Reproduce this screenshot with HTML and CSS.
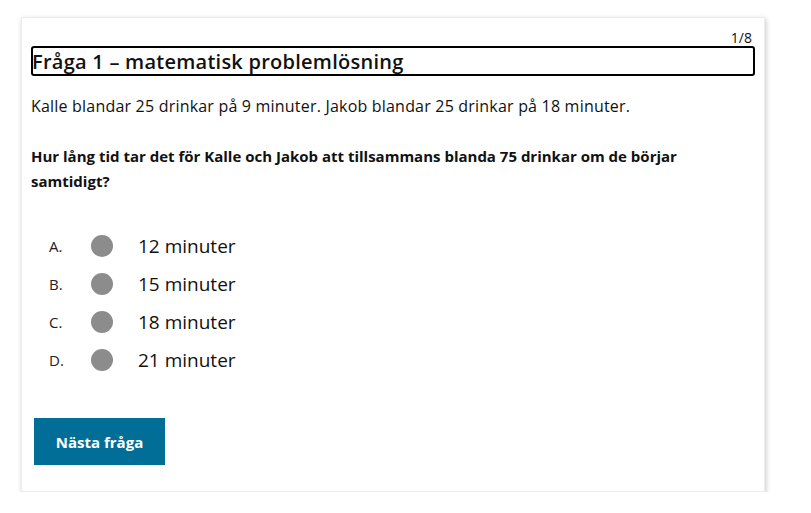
FILE: index.html
```html
<!DOCTYPE html>
<html lang="sv">
<head>
<meta charset="utf-8">
<link rel="stylesheet" href="styles.css">
</head>
<body>
<div class="card">
  <div class="counter">1/8</div>
  <h1 class="title">Fråga 1 – matematisk problemlösning</h1>
  <p class="intro">Kalle blandar 25 drinkar på 9 minuter. Jakob blandar 25 drinkar på 18 minuter.</p>
  <p class="question">Hur lång tid tar det för Kalle och Jakob att tillsammans blanda 75 drinkar om de börjar samtidigt?</p>
  <ul class="options">
    <li class="option"><span class="letter">A.</span><span class="dot"></span><span class="label">12 minuter</span></li>
    <li class="option"><span class="letter">B.</span><span class="dot"></span><span class="label">15 minuter</span></li>
    <li class="option"><span class="letter">C.</span><span class="dot"></span><span class="label">18 minuter</span></li>
    <li class="option"><span class="letter">D.</span><span class="dot"></span><span class="label">21 minuter</span></li>
  </ul>
  <button class="next">Nästa fråga</button>
</div>
</body>
</html>
```
FILE: styles.css
```css
html, body {
  margin: 0;
  padding: 0;
  background: #ffffff;
}
body {
  font-family: "Open Sans", sans-serif;
  color: #111;
  padding: 17px 0 0 21px;
}
.card {
  width: 744px;
  height: 475px;
  box-sizing: border-box;
  padding: 12px 9px 0 9px;
  background: #fff;
  border: 1px solid #ececec;
  box-shadow: 1px 2px 5px rgba(0,0,0,0.22);
}
.counter {
  text-align: right;
  font-size: 14px;
  line-height: 16px;
  padding-right: 3px;
}
.title {
  margin: 0;
  height: 30px;
  box-sizing: border-box;
  border: 2px solid #000;
  border-radius: 3px;
  font-size: 20px;
  font-weight: 600;
  letter-spacing: 0.25px;
  line-height: 27px;
  text-indent: -1px;
  color: #111;
}
.intro {
  margin: 18px 0 0 0;
  font-size: 16px;
  letter-spacing: 0.2px;
  line-height: 24px;
}
.question {
  margin: 26px 0 0 0;
  font-size: 15px;
  font-weight: 700;
  line-height: 25px;
}
.options {
  list-style: none;
  margin: 33px 0 0 0;
  padding: 0;
}
.option {
  display: flex;
  align-items: center;
  height: 38px;
}
.letter {
  width: 50px;
  padding-left: 18px;
  box-sizing: border-box;
  font-size: 15px;
  color: #222;
}
.dot {
  width: 22px;
  height: 22px;
  border-radius: 50%;
  background: #8c8c8c;
  margin-left: 10px;
}
.label {
  margin-left: 25px;
  font-size: 19px;
  color: #111;
}
.next {
  display: block;
  margin: 39px 0 0 3px;
  width: 131px;
  height: 47px;
  border: none;
  background: #006e97;
  color: #fff;
  font-family: "Open Sans", sans-serif;
  font-size: 15px;
  font-weight: 700;
}
```
